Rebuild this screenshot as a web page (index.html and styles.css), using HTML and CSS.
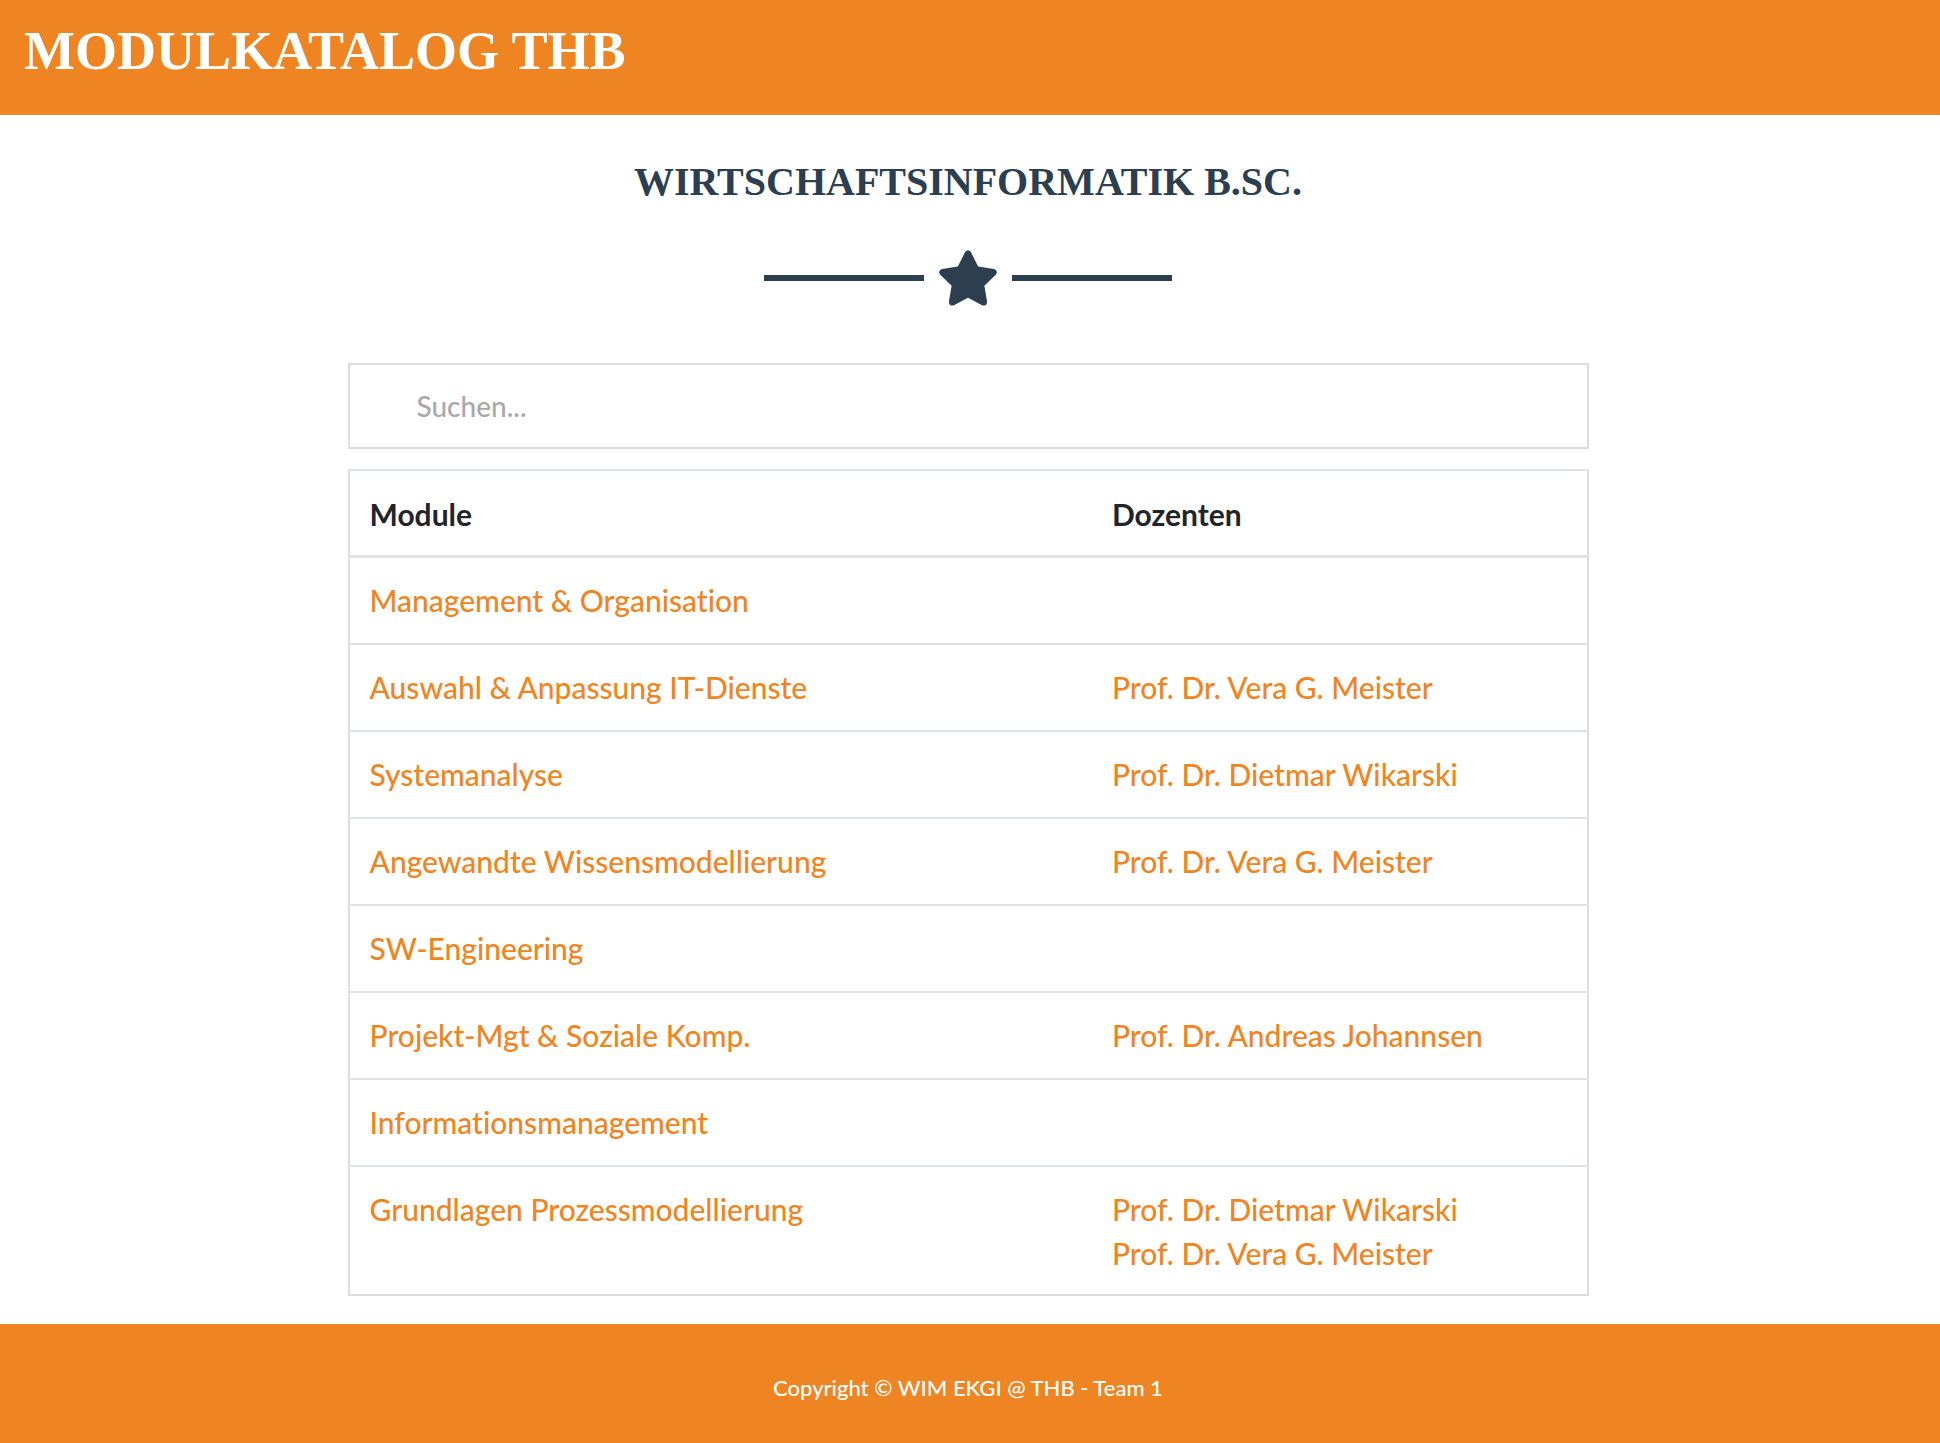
FILE: index.html
```html
<!DOCTYPE html>
<html lang="de">
<head>
<meta charset="utf-8">
<title>Modulkatalog THB</title>
<meta name="viewport" content="width=device-width, initial-scale=1">
<link rel="stylesheet" href="styles.css">
</head>
<body>
<header class="navbar"><a class="brand" href="#">Modulkatalog THB</a></header>
<main class="content">
<h1 class="title">Wirtschaftsinformatik B.Sc.</h1>
<div class="divider">
<span class="divider-line"></span>
<svg class="divider-icon" viewBox="0 0 576 512" aria-hidden="true"><path fill="currentColor" d="M259.3 17.8L194 150.2 47.900 171.500c-26.200 3.800-36.700 36.100-17.700 54.600l105.700 103-25 145.500c-4.500 26.300 23.200 46 46.400 33.700L288 439.600l130.700 68.700c23.200 12.200 50.900-7.400 46.400-33.700l-25-145.500 105.700-103c19-18.500 8.500-50.800-17.700-54.600L382 150.200 316.700 17.800c-11.700-23.600-45.600-23.900-57.400 0z"/></svg>
<span class="divider-line"></span>
</div>
<input class="search" type="text" placeholder="Suchen..." aria-label="Suchen">
<table class="modules">
<thead><tr><th class="col-module" scope="col">Module</th><th scope="col">Dozenten</th></tr></thead>
<tbody>
<tr><td><a href="#">Management &amp; Organisation</a></td><td></td></tr>
<tr><td><a href="#">Auswahl &amp; Anpassung IT-Dienste</a></td><td><a href="#">Prof. Dr. Vera G. Meister</a></td></tr>
<tr><td><a href="#">Systemanalyse</a></td><td><a href="#">Prof. Dr. Dietmar Wikarski</a></td></tr>
<tr><td><a href="#">Angewandte Wissensmodellierung</a></td><td><a href="#">Prof. Dr. Vera G. Meister</a></td></tr>
<tr><td><a href="#">SW-Engineering</a></td><td></td></tr>
<tr><td><a href="#">Projekt-Mgt &amp; Soziale Komp.</a></td><td><a href="#">Prof. Dr. Andreas Johannsen</a></td></tr>
<tr><td><a href="#">Informationsmanagement</a></td><td></td></tr>
<tr><td><a href="#">Grundlagen Prozessmodellierung</a></td><td><a href="#">Prof. Dr. Dietmar Wikarski</a><br><a href="#">Prof. Dr. Vera G. Meister</a></td></tr>
</tbody>
</table>
</main>
<footer class="footer">Copyright © WIM EKGI @ THB - Team 1</footer>
</body>
</html>
```
FILE: styles.css
```css
* {
  box-sizing: border-box;
}

body {
  display: flex;
  flex-direction: column;
  min-height: 100vh;
  margin: 0;
  background: #fff;
  color: #212529;
  font: 500 30px/44px Lato, sans-serif;
  font-variant-ligatures: none;
}

a {
  color: #ef8522;
  text-decoration: none;
}

.navbar {
  padding: 19px 24px 32px;
  background: #ef8522;
}

.brand {
  display: block;
  color: #fff;
  font: 700 54px/64px "Liberation Serif", serif;
  text-transform: uppercase;
}

.content {
  width: 100%;
  padding: 41px 28px 28px 24px;
}

.title {
  margin: 0;
  color: #2c3e50;
  font: 700 40px/52px "Liberation Serif", serif;
  text-align: center;
  text-transform: uppercase;
}

.divider {
  display: flex;
  align-items: center;
  justify-content: center;
  gap: 13px;
  margin: 42px 0 57px;
  color: #2c3e50;
}

.divider-line {
  width: 160px;
  height: 6px;
  background: currentColor;
}

.divider-icon {
  width: 62px;
  height: 56px;
}

.search {
  display: block;
  width: 100%;
  max-width: 1241px;
  height: 86px;
  margin: 0 auto 20px;
  padding: 0 67px;
  border: 2px solid #ddd;
  border-radius: 0;
  background: #fff;
  color: #212529;
  font: inherit;
  font-size: 28px;
}

.search::placeholder {
  color: #a9a9a9;
  opacity: 1;
}

.modules {
  width: 100%;
  max-width: 1241px;
  margin: 0 auto;
  border: 2px solid #ddd;
  border-collapse: collapse;
}

.modules th,
.modules td {
  padding: 20px 20px 21px;
  border-top: 2px solid #dee2e6;
  text-align: left;
  vertical-align: top;
}

.modules thead th {
  padding: 21px 20px 19px;
  border-bottom: 3px solid #dee2e6;
  font-weight: 700;
}

.modules tbody tr:last-child td {
  padding-bottom: 19px;
}

.col-module {
  width: 60%;
}

.footer {
  flex: 1;
  padding: 48px 28px 48px 24px;
  background: #ef8522;
  color: #fff;
  font-size: 22px;
  line-height: 32px;
  text-align: center;
}
```
